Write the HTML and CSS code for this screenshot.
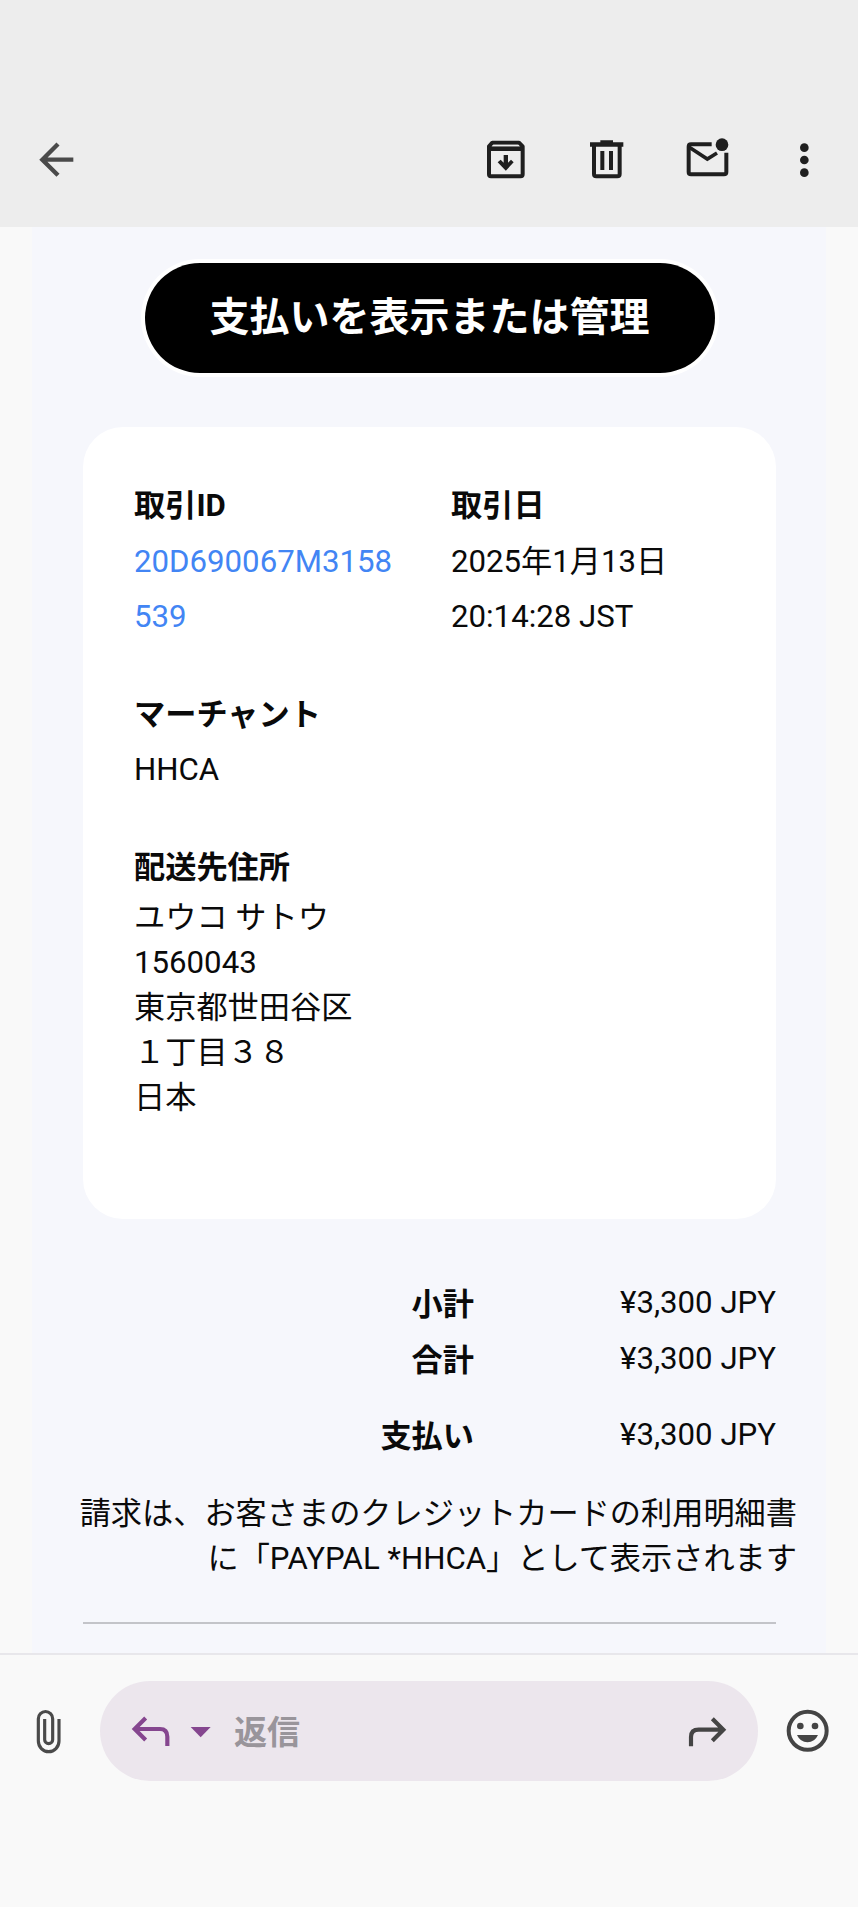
FILE: index.html
```html
<!DOCTYPE html>
<html lang="ja">
<head>
<meta charset="utf-8">
<title>支払い</title>
<link rel="stylesheet" href="styles.css">
</head>
<body>
<div class="screen">
  <header class="appbar">
    <svg class="icon back" viewBox="96 75 150 150"><path d="M220 149H128M174 102L127 149L174 196" fill="none" stroke="#4a4a4a" stroke-width="13"/></svg>
    <svg class="icon archive" viewBox="153 75 150 150"><path d="M177 109L187 98H267L278 109V193Q278 199 272 199H183Q177 199 177 193Z" fill="none" stroke="#1f1f1f" stroke-width="12" stroke-linejoin="round"/><path d="M177 109H278V123H177ZM221 135H234V158L243 149L251 157L227.500 182L203 157L212 149L221 158Z" fill="#1f1f1f"/><path d="M190 104H265L269 109H186Z" fill="#ededed"/></svg>
    <svg class="icon trash" viewBox="453 75 150 150"><path d="M480 97H511V91H549V97H580V110H480ZM511 123H523V180H511ZM537 123H549V180H537Z" fill="#1f1f1f"/><path d="M492 104V192Q492 199 499 199H562Q569 199 569 192V104" fill="none" stroke="#1f1f1f" stroke-width="12"/></svg>
    <svg class="icon mail" viewBox="759 75 150 150"><path d="M845 103H783Q776 103 776 110V186Q776 193 783 193H882Q889 193 889 186V128" fill="none" stroke="#1f1f1f" stroke-width="12"/><path d="M778 112L832 147L861 129" fill="none" stroke="#1f1f1f" stroke-width="11"/><circle cx="876" cy="104" r="19" fill="#1f1f1f"/></svg>
    <svg class="icon more" viewBox="1047 75 150 150" fill="#1f1f1f"><circle cx="1123" cy="113" r="13"/><circle cx="1123" cy="150" r="13"/><circle cx="1123" cy="188" r="13"/></svg>
  </header>

  <main class="mail-body">
    <a class="cta">支払いを表示または管理</a>

    <section class="card">
      <div class="columns">
        <div class="column">
          <div class="line label">取引ID</div>
          <div class="line link">20D690067M3158</div>
          <div class="line link">539</div>
        </div>
        <div class="column">
          <div class="line label">取引日</div>
          <div class="line">2025年1月13日</div>
          <div class="line">20:14:28 JST</div>
        </div>
      </div>
      <div class="block">
        <div class="line label">マーチャント</div>
        <div class="line">HHCA</div>
      </div>
      <div class="block">
        <div class="line label">配送先住所</div>
        <address class="address">ユウコ サトウ<br>1560043<br>東京都世田谷区<br>１丁目３８<br>日本</address>
      </div>
    </section>

    <section class="totals">
      <div class="total"><span class="total-name">小計</span><span class="amount">¥3,300 JPY</span></div>
      <div class="total"><span class="total-name">合計</span><span class="amount">¥3,300 JPY</span></div>
      <div class="total paid"><span class="total-name">支払い</span><span class="amount">¥3,300 JPY</span></div>
    </section>

    <p class="note">請求は、お客さまのクレジットカードの利用明細書<br>に「PAYPAL *HHCA」として表示されます</p>
    <hr class="rule">
  </main>

  <footer class="composer">
    <svg class="icon" viewBox="72 198 150 150"><path d="M177 237V303A31 32 0 0 1 115 303V236A21.500 21.500 0 0 1 158 236V299A12 12 0 0 1 134 299V237" fill="none" stroke="#4a4a4a" stroke-width="9.500"/></svg>
    <div class="reply">
      <svg class="icon" viewBox="390 198 150 150"><path d="M502 318V290Q502 267 480 267H405M437 234L404 267L437 300" fill="none" stroke="#85468f" stroke-width="12.500"/></svg>
      <svg class="caret" viewBox="561 198 81 150"><path d="M572 261H632L602 292Z" fill="#85468f"/></svg>
      <span class="placeholder">返信</span>
      <svg class="icon forward" viewBox="756 198 150 150"><path d="M783 319V291Q783 269 806 269H879M847 236L880 269L847 302" fill="none" stroke="#444" stroke-width="12.500"/></svg>
    </div>
    <svg class="icon emoji" viewBox="1056 198 150 150"><circle cx="1133" cy="272.500" r="57" fill="none" stroke="#444" stroke-width="12"/><circle cx="1111" cy="258" r="10" fill="#444"/><circle cx="1155" cy="258" r="10" fill="#444"/><path d="M1101 285H1164Q1154 307 1132.500 307T1101 285Z" fill="#444"/></svg>
  </footer>
</div>
</body>
</html>
```

FILE: styles.css
```css
* {
  box-sizing: border-box;
}

body {
  margin: 0;
  background: #f9f9f9;
  color: #0a0a0a;
  font-family: Roboto, "Noto Sans CJK JP", sans-serif;
  font-size: 31.2px;
}

.screen {
  display: flex;
  flex-direction: column;
  width: 858px;
  height: 1907px;
}

.appbar {
  display: flex;
  flex: none;
  height: 227px;
  padding: 135px 29px 0 32px;
  background: #ededed;
}

.icon {
  flex: none;
  display: block;
  width: 50px;
  height: 50px;
}

.archive {
  margin-left: auto;
}

.trash {
  margin-left: 50px;
}

.mail {
  margin-left: 52px;
}

.more {
  margin-left: 46px;
}

.mail-body {
  display: flex;
  flex: none;
  flex-direction: column;
  width: 794px;
  height: 1426px;
  margin-left: 32px;
  padding: 36px 50px 0 51px;
  background: #f6f7fc;
}

.cta {
  align-self: center;
  width: 570px;
  height: 110px;
  border-radius: 55px;
  background: #000;
  box-shadow: 0 0 0 4px #fff;
  color: #fff;
  font-size: 40px;
  font-weight: 700;
  line-height: 109px;
  text-align: center;
  white-space: nowrap;
}

.card {
  height: 792px;
  margin-top: 54px;
  padding: 51px;
  border-radius: 40px;
  background: #fff;
}

.columns {
  display: grid;
  grid-template-columns: 317px 1fr;
}

.line {
  line-height: 55.5px;
  white-space: nowrap;
}

.label {
  font-weight: 700;
}

.link {
  color: #4285f4;
}

.block {
  margin-top: 42px;
}

.address {
  font-style: normal;
  line-height: 45px;
}

.totals {
  margin-top: 56px;
}

.total {
  display: flex;
  justify-content: space-between;
  line-height: 55.5px;
}

.total-name {
  width: 391px;
  padding-top: 2px;
  margin-bottom: -2px;
  font-weight: 700;
  text-align: right;
}

.paid {
  margin-top: 21px;
}

.note {
  margin: 28px -21px 0 -10px;
  line-height: 45px;
  text-align: right;
  white-space: nowrap;
}

.rule {
  width: 100%;
  height: 2px;
  margin: 41px 0 0;
  border: 0;
  background: #c3c4c9;
}

.composer {
  display: flex;
  flex: 1;
  align-items: flex-start;
  padding: 26px 26px 0 24px;
  border-top: 2px solid #e8e7eb;
}

.composer > .icon {
  margin-top: 25px;
}

.reply {
  display: flex;
  align-items: center;
  width: 658px;
  height: 100px;
  margin: 0 24px 0 26px;
  padding: 0 26px 0 30px;
  border-radius: 50px;
  background: #ece6ed;
}

.caret {
  width: 27px;
  height: 50px;
  margin: 0 20px 0 7px;
}

.placeholder {
  padding-bottom: 2px;
  color: #99959b;
  font-size: 33px;
  font-weight: 700;
}

.forward {
  margin-left: auto;
}
```
